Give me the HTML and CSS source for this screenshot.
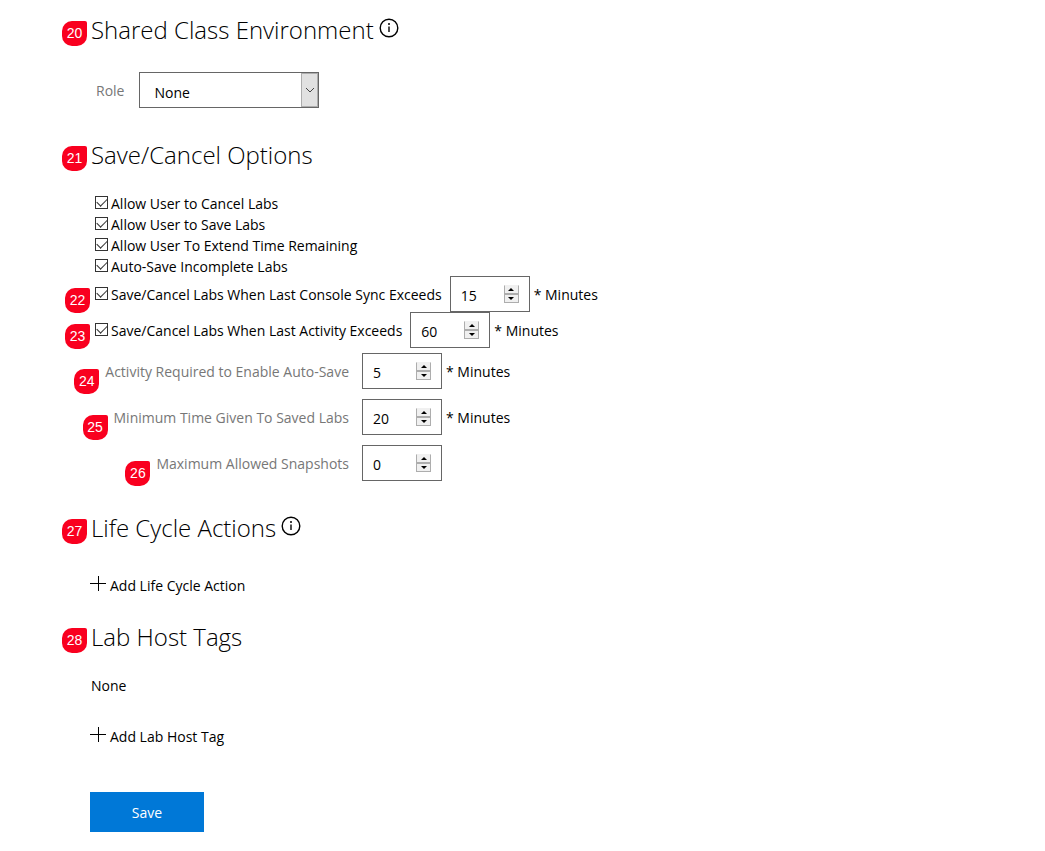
FILE: index.html
```html
<!DOCTYPE html>
<html lang="en">
<head>
<meta charset="utf-8">
<meta name="viewport" content="width=device-width, initial-scale=1">
<title>Lab Profile</title>
<link rel="stylesheet" href="styles.css">
</head>
<body>
<form class="page">
  <section class="section">
    <h2 class="heading"><span class="badge">20</span>Shared Class Environment
      <svg class="info" viewBox="0 0 20 20" aria-hidden="true"><circle cx="10" cy="10" r="8.8"/><path d="M10 8.5v5.5"/><circle class="dot" cx="10" cy="6" r="1"/></svg>
    </h2>
    <div class="role-row">
      <label class="muted" for="role">Role</label>
      <div class="select-box">
        <select id="role"><option>None</option></select>
        <span class="arrow"><svg viewBox="0 0 10 6" aria-hidden="true"><path d="M1 1l4 4 4-4"/></svg></span>
      </div>
    </div>
  </section>

  <section class="section">
    <h2 class="heading"><span class="badge">21</span>Save/Cancel Options</h2>
    <div class="checks">
      <label class="check"><input type="checkbox" checked>Allow User to Cancel Labs</label>
      <label class="check"><input type="checkbox" checked>Allow User to Save Labs</label>
      <label class="check"><input type="checkbox" checked>Allow User To Extend Time Remaining</label>
      <label class="check"><input type="checkbox" checked>Auto-Save Incomplete Labs</label>
    </div>
    <div class="limit">
      <span class="badge badge-check">22</span>
      <label class="check"><input type="checkbox" checked>Save/Cancel Labs When Last Console Sync Exceeds</label>
      <span class="number"><input type="number" value="15" aria-label="Console sync minutes"><span class="spin"><button type="button" class="up" aria-label="Increase"></button><button type="button" class="down" aria-label="Decrease"></button></span></span>
      <span>* Minutes</span>
    </div>
    <div class="limit">
      <span class="badge badge-check">23</span>
      <label class="check"><input type="checkbox" checked>Save/Cancel Labs When Last Activity Exceeds</label>
      <span class="number"><input type="number" value="60" aria-label="Activity minutes"><span class="spin"><button type="button" class="up" aria-label="Increase"></button><button type="button" class="down" aria-label="Decrease"></button></span></span>
      <span>* Minutes</span>
    </div>
    <div class="fields">
      <div class="field">
        <label class="muted" for="required"><span class="badge">24</span>Activity Required to Enable Auto-Save</label>
        <span class="number"><input type="number" id="required" value="5"><span class="spin"><button type="button" class="up" aria-label="Increase"></button><button type="button" class="down" aria-label="Decrease"></button></span></span>
        <span>* Minutes</span>
      </div>
      <div class="field">
        <label class="muted" for="minimum"><span class="badge">25</span>Minimum Time Given To Saved Labs</label>
        <span class="number"><input type="number" id="minimum" value="20"><span class="spin"><button type="button" class="up" aria-label="Increase"></button><button type="button" class="down" aria-label="Decrease"></button></span></span>
        <span>* Minutes</span>
      </div>
      <div class="field">
        <label class="muted" for="snapshots"><span class="badge">26</span>Maximum Allowed Snapshots</label>
        <span class="number"><input type="number" id="snapshots" value="0"><span class="spin"><button type="button" class="up" aria-label="Increase"></button><button type="button" class="down" aria-label="Decrease"></button></span></span>
      </div>
    </div>
  </section>

  <section class="section cycle">
    <h2 class="heading"><span class="badge">27</span>Life Cycle Actions
      <svg class="info" viewBox="0 0 20 20" aria-hidden="true"><circle cx="10" cy="10" r="8.8"/><path d="M10 8.5v5.5"/><circle class="dot" cx="10" cy="6" r="1"/></svg>
    </h2>
    <a class="add" href="#"><svg viewBox="0 0 16 16" aria-hidden="true"><path d="M0 7.5h16M8.5 0v15"/></svg>Add Life Cycle Action</a>
  </section>

  <section class="section tags">
    <h2 class="heading"><span class="badge">28</span>Lab Host Tags</h2>
    <p class="none">None</p>
    <a class="add" href="#"><svg viewBox="0 0 16 16" aria-hidden="true"><path d="M0 7.5h16M8.5 0v15"/></svg>Add Lab Host Tag</a>
  </section>

  <button type="submit" class="save">Save</button>
</form>
</body>
</html>
```
FILE: styles.css
```css
* { box-sizing: border-box; }
body {
  margin: 0;
  background: #fff;
  color: #000;
  font: 14px/21px "Segoe UI", "Open Sans", "Noto Sans", sans-serif;
}
input, select, button { font: inherit; color: inherit; }
.page { padding: 13px 16px 19px 90px; }
.section { margin-bottom: 30px; }
.section.cycle { margin-bottom: 24px; }
.heading {
  position: relative;
  display: flex;
  align-items: center;
  gap: 5px;
  margin: 0 0 21px;
  padding-left: 1px;
  font-size: 24px;
  font-weight: 300;
  line-height: 34px;
}
.info {
  width: 20px;
  height: 20px;
  margin-bottom: 4px;
  fill: none;
  stroke: #000;
  stroke-width: 1.4;
}
.info .dot { fill: #000; stroke: none; }
.badge {
  position: absolute;
  top: 8px;
  left: -28px;
  width: 25px;
  height: 25px;
  border-radius: 10px 2px 10px 10px;
  background: #f9001f;
  color: #fff;
  font: 14px/25px "Liberation Sans", Arial, sans-serif;
  text-align: center;
}
.badge-check { top: 12px; left: -25px; }
.muted { color: #777; }

.role-row {
  display: flex;
  align-items: center;
  gap: 15px;
  padding: 4px 0 0 6px;
}
.select-box { position: relative; width: 180px; }
.select-box select {
  display: block;
  width: 100%;
  height: 36px;
  padding: 4px 30px 0 14px;
  border: 1px solid #666;
  border-radius: 0;
  background: #fff;
  appearance: none;
}
.arrow {
  position: absolute;
  top: 1px;
  right: 1px;
  bottom: 1px;
  display: grid;
  place-items: center;
  width: 17px;
  border: 1px solid #adadad;
  background: #e1e1e1;
  pointer-events: none;
}
.arrow svg { width: 10px; height: 6px; fill: none; stroke: #444; }

.checks { margin-bottom: -1px; }
.check { display: flex; align-items: center; gap: 3px; padding-left: 5px; }
.checks .check { width: fit-content; }
.check input {
  display: grid;
  place-items: center;
  width: 13px;
  height: 13px;
  margin: 0 0 2px;
  border: 1px solid #333;
  background: #fff;
  appearance: none;
}
.check input:checked::before {
  content: "";
  width: 9px;
  height: 5px;
  margin-bottom: 3px;
  border: solid #333;
  border-width: 0 0 1px 1px;
  transform: rotate(-45deg);
}
.limit { position: relative; display: flex; align-items: center; gap: 4px; }
.limit .number { margin-left: 4px; }
.number { position: relative; width: 80px; }
.number input {
  display: block;
  width: 100%;
  height: 36px;
  padding: 2px 28px 0 10px;
  border: 1px solid #666;
  border-radius: 0;
  background: #fff;
  appearance: textfield;
}
.number input::-webkit-inner-spin-button { display: none; }
.spin {
  position: absolute;
  top: 9px;
  right: 11px;
  display: grid;
  width: 15px;
}
.spin button {
  display: grid;
  place-items: center;
  height: 9px;
  padding: 0;
  border: 1px solid #adadad;
  background: #f0f0f0;
}
.spin .up { border-top-color: #f0f0f0; }
.spin button::before { content: ""; border: solid transparent; border-width: 0 3px; }
.spin .up::before { border-bottom: 3px solid #000; }
.spin .down::before { border-top: 3px solid #000; }

.fields { display: grid; gap: 10px; padding-top: 5px; }
.field {
  display: grid;
  grid-template-columns: 259px 80px auto;
  justify-content: start;
  align-items: center;
}
.field .muted { position: relative; justify-self: end; }
.field .badge { left: -31px; }
.field .number { margin-left: 13px; }
.field > :last-child:not(.number) { margin-left: 17px; }

.add {
  display: flex;
  align-items: center;
  gap: 4px;
  width: fit-content;
  margin-top: 30px;
  color: #000;
  text-decoration: none;
}
.add svg { width: 16px; height: 16px; margin-bottom: 4px; fill: none; stroke: #000; }
.none { margin: 0; padding-left: 1px; }
.section.tags { margin-bottom: 45px; }
.save {
  width: 114px;
  height: 40px;
  padding: 0;
  border: 0;
  background: #0078d7;
  color: #fff;
}
```
